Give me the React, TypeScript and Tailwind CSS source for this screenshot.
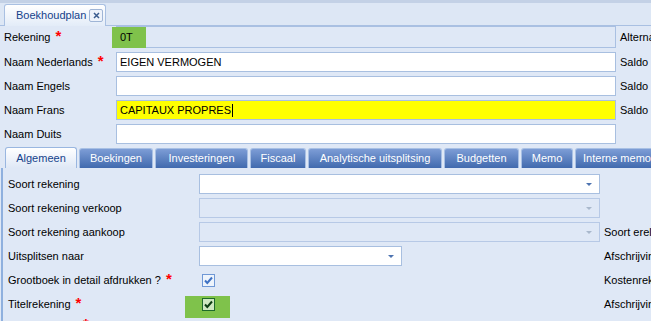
import React from 'react';

const Star = () => (
  <span className="ml-[5px] relative top-[-2px] text-[15px] leading-none font-bold text-[#ff0000]">*</span>
);

function Field({ w, bg = 'bg-white', children, disabled }: { w: string; bg?: string; children?: React.ReactNode; disabled?: boolean }) {
  return (
    <div
      className={`${w} shrink-0 h-[20px] ${bg} border ${disabled ? 'border-[#b7c9e6]' : 'border-[#a8bfe0]'} flex items-center px-[3px] text-black whitespace-nowrap`}
    >
      {children}
    </div>
  );
}

function Combo({ w, disabled }: { w: string; disabled?: boolean }) {
  return (
    <div
      className={`${w} shrink-0 h-[20px] border ${disabled ? 'border-[#b7c9e6] bg-[#dfe8f6]' : 'border-[#a8bfe0] bg-white'} flex items-center justify-end pr-[7px]`}
    >
      <div
        className={`w-0 h-0 border-l-[3px] border-r-[3px] border-t-[3px] border-l-transparent border-r-transparent ${disabled ? 'border-t-[#a9b8cc]' : 'border-t-[#4d73b0]'}`}
      />
    </div>
  );
}

function Check({ dark }: { dark?: boolean }) {
  return (
    <div
      className={`w-[13px] h-[13px] shrink-0 border ${dark ? 'border-[#1e6a2a] bg-[#cfe8c0]' : 'border-[#6f98d6] bg-[#eef4fc]'} flex items-center justify-center`}
    >
      <svg width="9" height="9" viewBox="0 0 9 9">
        <path d="M1 4.5 L3.3 7 L8 1.5" fill="none" stroke={dark ? '#0d3d12' : '#3f72c4'} strokeWidth="2" />
      </svg>
    </div>
  );
}

const tabs = [
  { name: 'Boekingen', w: 'w-[74px]' },
  { name: 'Investeringen', w: 'w-[93px]' },
  { name: 'Fiscaal', w: 'w-[56px]' },
  { name: 'Analytische uitsplitsing', w: 'w-[134px]' },
  { name: 'Budgetten', w: 'w-[75px]' },
  { name: 'Memo', w: 'w-[52px]' },
  { name: 'Interne memo', w: 'w-[84px]' },
];

export default function App() {
  return (
    <div
      className="w-[651px] h-[321px] overflow-hidden bg-[#dfe8f6] text-[11px] text-black relative"
      style={{ fontFamily: '"Liberation Sans", Arial, sans-serif' }}
    >
      {/* document tabs */}
      <div className="h-[26px] border-t-[3px] border-[#c3d1e6] border-b border-b-[#a9c0e2] bg-[#dde7f5] flex items-end pl-[4px]">
        <div className="w-[102px] h-[22px] -mb-px rounded-t-[3px] border border-b-0 border-[#a9c0e2] bg-gradient-to-b from-white to-[#e3ecf8] flex items-center justify-between pl-[11px] pr-[2px]">
          <span className="text-[#15428b] text-[11px] whitespace-nowrap">Boekhoudplan</span>
          <div className="w-[14px] h-[13px] shrink-0 border border-[#9fb5d6] rounded-[2px] bg-[#eef3fb] flex items-center justify-center">
            <svg width="7" height="7" viewBox="0 0 7 7">
              <path d="M1 1 L6 6 M6 1 L1 6" stroke="#3a5c8f" strokeWidth="1.5" />
            </svg>
          </div>
        </div>
      </div>

      {/* header form */}
      <div className="flex flex-col pl-[4px]">
        <div className="h-[22px] flex items-center">
          <div className="w-[112px] shrink-0 flex items-center">
            Rekening
            <Star />
          </div>
          <div className="relative shrink-0">
            <div className="w-[500px] h-[22px] border border-[#a9c0e2] bg-[#dfe8f6]" />
            <div className="absolute left-[-4px] top-[1px] w-[34px] h-[21px] bg-[#7fc24b] flex items-center pl-[8px]">0T</div>
          </div>
          <span className="ml-[4px] whitespace-nowrap">Alternatief</span>
        </div>

        <div className="h-[20px] mt-[4px] flex items-center">
          <div className="w-[112px] shrink-0 flex items-center">
            Naam Nederlands
            <Star />
          </div>
          <Field w="w-[500px]">EIGEN VERMOGEN</Field>
          <span className="ml-[4px] whitespace-nowrap">Saldo Debet</span>
        </div>

        <div className="h-[20px] mt-[4px] flex items-center">
          <div className="w-[112px] shrink-0">Naam Engels</div>
          <Field w="w-[500px]" />
          <span className="ml-[4px] whitespace-nowrap">Saldo Credit</span>
        </div>

        <div className="h-[20px] mt-[4px] flex items-center">
          <div className="w-[112px] shrink-0">Naam Frans</div>
          <Field w="w-[500px]" bg="bg-[#ffff00]">
            CAPITAUX PROPRES
            <span className="inline-block w-px h-[13px] bg-black ml-[1px]" />
          </Field>
          <span className="ml-[4px] whitespace-nowrap">Saldo</span>
        </div>

        <div className="h-[20px] mt-[4px] flex items-center">
          <div className="w-[112px] shrink-0">Naam Duits</div>
          <Field w="w-[500px]" />
        </div>
      </div>

      {/* detail tabs */}
      <div className="h-[22px] mt-[2px] flex items-end pl-[5px] gap-[2px] whitespace-nowrap">
        <div className="w-[72px] shrink-0 h-[21px] rounded-t-[3px] border border-b-0 border-[#99b6e0] bg-gradient-to-b from-white to-[#dfe8f6] flex items-center justify-center text-[#15428b]">
          Algemeen
        </div>
        {tabs.map((t) => (
          <div
            key={t.name}
            className={`${t.w} shrink-0 h-[20px] rounded-t-[3px] border border-b-0 border-[#a8c0e4] bg-gradient-to-b from-[#7d9dd6] to-[#416aae] flex items-center justify-center text-white`}
          >
            {t.name}
          </div>
        ))}
      </div>

      {/* panel */}
      <div className="ml-[1px] border-l-2 border-[#8fb0de] pt-[6px] pl-[5px] flex flex-col gap-[4px] whitespace-nowrap">
        <div className="h-[20px] flex items-center">
          <div className="w-[191px] shrink-0">Soort rekening</div>
          <Combo w="w-[401px]" />
        </div>
        <div className="h-[20px] flex items-center">
          <div className="w-[191px] shrink-0">Soort rekening verkoop</div>
          <Combo w="w-[401px]" disabled />
        </div>
        <div className="h-[20px] flex items-center">
          <div className="w-[191px] shrink-0">Soort rekening aankoop</div>
          <Combo w="w-[401px]" disabled />
          <span className="ml-[4px]">Soort erelonen</span>
        </div>
        <div className="h-[20px] flex items-center">
          <div className="w-[191px] shrink-0">Uitsplitsen naar</div>
          <Combo w="w-[203px]" />
          <span className="ml-[202px]">Afschrijvingen</span>
        </div>
        <div className="h-[20px] flex items-center">
          <div className="w-[194px] shrink-0 flex items-center">
            Grootboek in detail afdrukken ?
            <Star />
          </div>
          <Check />
          <span className="ml-[389px]">Kostenrekening</span>
        </div>
        <div className="h-[20px] flex items-center">
          <div className="w-[194px] shrink-0 flex items-center">
            Titelrekening
            <Star />
          </div>
          <div className="relative w-[13px] h-[13px] shrink-0">
            <div className="absolute left-[-17px] top-[-2px] w-[45px] h-[22px] bg-[#7fc24b]" />
            <div className="relative">
              <Check dark />
            </div>
          </div>
          <span className="ml-[389px]">Afschrijvingen</span>
        </div>
        <div className="h-[20px] flex items-start">
          <div className="w-[194px] shrink-0 flex items-start pl-[70px]">
            <Star />
          </div>
          <div className="mt-[3px]">
            <Check />
          </div>
        </div>
      </div>
    </div>
  );
}
